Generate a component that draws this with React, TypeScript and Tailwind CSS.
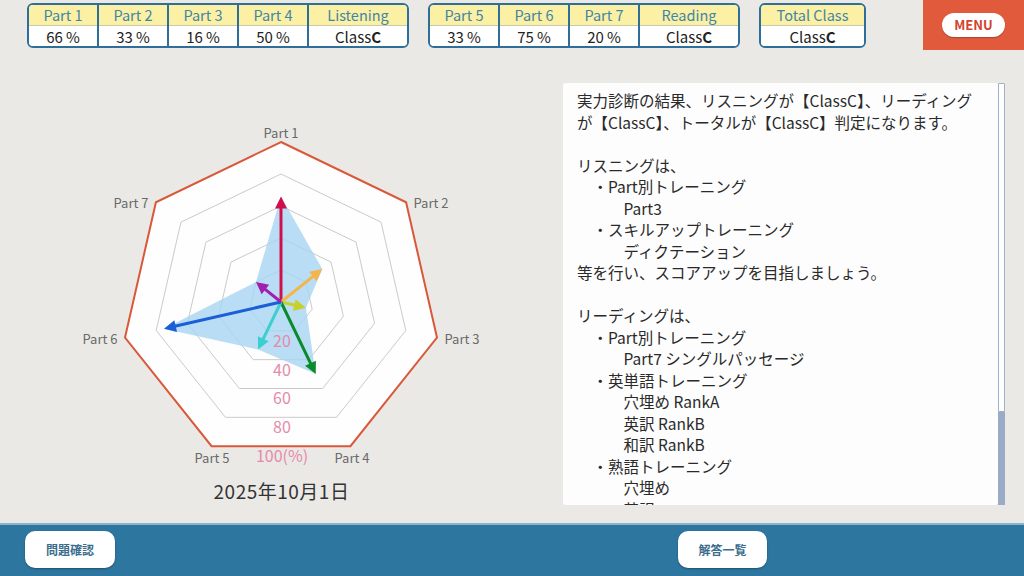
import React from 'react';

const FONT = { fontFamily: '"Noto Sans CJK JP", "Noto Sans", sans-serif' };

type Cell = { head: string; value: React.ReactNode; wide?: boolean };

const Pct = ({ v }: { v: number }) => (
  <span>
    {v}
    <span className="ml-[3px]">%</span>
  </span>
);

const ClassC = () => (
  <span>
    Class<span className="font-bold">C</span>
  </span>
);

const ScoreTable = ({ cells, wideClass = 'w-[100px]' }: { cells: Cell[]; wideClass?: string }) => (
  <div className="flex border-2 border-[#2f6e98] rounded-[6px] overflow-hidden bg-white">
    {cells.map((c, i) => (
      <div
        key={c.head}
        className={`flex flex-col ${c.wide ? wideClass : i === 0 ? 'w-[68px]' : 'w-[70px]'} ${i > 0 ? 'border-l-2 border-[#2f6e98]' : ''}`}
      >
        <div className="h-[21px] bg-[#fbf0a4] border-b border-[#c9c9a8] flex items-center justify-center text-[14.5px] text-[#3f86a6] leading-none">
          {c.head}
        </div>
        <div className="h-[20px] bg-white flex items-center justify-center text-[15px] text-[#222] leading-none">
          {c.value}
        </div>
      </div>
    ))}
  </div>
);

const DATA = [
  { v: 66, color: '#d0104c' },
  { v: 33, color: '#f4b54c' },
  { v: 16, color: '#c6d12e' },
  { v: 50, color: '#0b8a2c' },
  { v: 33, color: '#3ccfcf' },
  { v: 75, color: '#1a5ed8' },
  { v: 20, color: '#a01fae' },
];

const LABELS = [
  { t: 'Part 1', x: 281, y: 82 },
  { t: 'Part 2', x: 431, y: 152 },
  { t: 'Part 3', x: 462, y: 288 },
  { t: 'Part 4', x: 352, y: 407 },
  { t: 'Part 5', x: 212, y: 407 },
  { t: 'Part 6', x: 100, y: 288 },
  { t: 'Part 7', x: 131, y: 152 },
];

const CX = 281;
const CY = 252;
const R = 160;

const pt = (k: number, r: number) => {
  const a = ((-90 + (k * 360) / 7) * Math.PI) / 180;
  return [CX + r * Math.cos(a), CY + r * Math.sin(a)];
};

const ring = (r: number) =>
  Array.from({ length: 7 }, (_, k) => pt(k, r).join(',')).join(' ');

const RadarChart = () => {
  const poly = DATA.map((d, k) => pt(k, (d.v / 100) * R).join(',')).join(' ');
  return (
    <svg width={563} height={430} viewBox="0 0 563 430">
      <polygon points={ring(R)} fill="#fefefe" stroke="#d9583a" strokeWidth={2} />
      {[32, 64, 96, 128].map(r => (
        <polygon key={r} points={ring(r)} fill="none" stroke="#c4c4c4" strokeWidth={0.9} />
      ))}
      <polygon points={poly} fill="#a8d4f3" fillOpacity={0.8} />
      {DATA.map((d, k) => {
        const r = (d.v / 100) * R;
        const a = ((-90 + (k * 360) / 7) * Math.PI) / 180;
        const ux = Math.cos(a);
        const uy = Math.sin(a);
        const tip = [CX + r * ux, CY + r * uy];
        const hl = 12;
        const hw = 6;
        const base = [tip[0] - hl * ux, tip[1] - hl * uy];
        const head = `${tip[0]},${tip[1]} ${base[0] - hw * uy},${base[1] + hw * ux} ${base[0] + hw * uy},${base[1] - hw * ux}`;
        return (
          <g key={k}>
            <line x1={CX} y1={CY} x2={base[0] + ux} y2={base[1] + uy} stroke={d.color} strokeWidth={3} />
            <polygon points={head} fill={d.color} />
          </g>
        );
      })}
      {['20', '40', '60', '80', '100(%)'].map((t, i) => (
        <text
          key={t}
          x={282}
          y={[290, 319, 347, 376, 405][i]}
          textAnchor="middle"
          dominantBaseline="central"
          fontSize={16}
          fill="#e58aab"
          style={FONT}
        >
          {t}
        </text>
      ))}
      {LABELS.map(l => (
        <text
          key={l.t}
          x={l.x}
          y={l.y}
          textAnchor="middle"
          dominantBaseline="central"
          fontSize={13}
          fill="#6a6a6a"
          style={FONT}
        >
          {l.t}
        </text>
      ))}
    </svg>
  );
};

const LINES = [
  '実力診断の結果、リスニングが【ClassC】、リーディング',
  'が【ClassC】、トータルが【ClassC】判定になります。',
  '',
  'リスニングは、',
  '　・Part別トレーニング',
  '　　　Part3',
  '　・スキルアップトレーニング',
  '　　　ディクテーション',
  '等を行い、スコアアップを目指しましょう。',
  '',
  'リーディングは、',
  '　・Part別トレーニング',
  '　　　Part7 シングルパッセージ',
  '　・英単語トレーニング',
  '　　　穴埋め RankA',
  '　　　英訳 RankB',
  '　　　和訳 RankB',
  '　・熟語トレーニング',
  '　　　穴埋め',
  '　　　英訳',
];

export default function App() {
  return (
    <div className="w-[1024px] h-[576px] bg-[#ebe9e6] flex flex-col overflow-hidden" style={FONT}>
      {/* header */}
      <div className="h-[50px] flex items-start shrink-0">
        <div className="ml-[27px] mt-[3px]">
          <ScoreTable
            cells={[
              { head: 'Part 1', value: <Pct v={66} /> },
              { head: 'Part 2', value: <Pct v={33} /> },
              { head: 'Part 3', value: <Pct v={16} /> },
              { head: 'Part 4', value: <Pct v={50} /> },
              { head: 'Listening', value: <ClassC />, wide: true },
            ]}
          />
        </div>
        <div className="ml-[19px] mt-[3px]">
          <ScoreTable
            cells={[
              { head: 'Part 5', value: <Pct v={33} /> },
              { head: 'Part 6', value: <Pct v={75} /> },
              { head: 'Part 7', value: <Pct v={20} /> },
              { head: 'Reading', value: <ClassC />, wide: true },
            ]}
          />
        </div>
        <div className="ml-[19px] mt-[3px]">
          <ScoreTable wideClass="w-[103px]" cells={[{ head: 'Total Class', value: <ClassC />, wide: true }]} />
        </div>
        <div className="ml-auto w-[101px] h-[50px] bg-[#e05a3b] flex items-center justify-center">
          <div className="w-[63px] h-[24px] rounded-full bg-white flex items-center justify-center text-[13px] font-bold text-[#d3432f] shadow-[0_1px_1px_rgba(0,0,0,0.25)]">
            MENU
          </div>
        </div>
      </div>

      {/* main */}
      <div className="flex-1 flex">
        <div className="w-[563px] flex flex-col items-center">
          <RadarChart />
          <div className="w-[563px] text-center text-[19px] leading-[22px] tracking-[0.5px] text-[#333]">2025年10月1日</div>
        </div>
        <div className="mt-[33px] h-[422px] flex">
          <div className="w-[435px] h-full bg-[#fdfdfd] rounded-[3px] overflow-hidden pl-[14px] pt-[7px]">
            {LINES.map((l, i) => (
              <div key={i} className="h-[21.5px] text-[15.5px] leading-[21.5px] text-[#2a2a2a] whitespace-pre">
                {l}
              </div>
            ))}
          </div>
          <div className="w-[7px] h-full flex flex-col">
            <div className="flex-1 border border-[#9fb1c8] bg-white rounded-t-[1px]" />
            <div className="h-[93px] bg-[#9aabc8]" />
          </div>
        </div>
      </div>

      {/* footer */}
      <div className="h-[53px] shrink-0 bg-[#2d76a0] border-t-2 border-[#8fb3cb] flex items-start pt-[6px]">
        <button className="ml-[25px] w-[90px] h-[37px] bg-white rounded-[10px] text-[12px] font-bold text-[#3b6c8c] shadow-[0_1px_2px_rgba(0,0,0,0.3)]">
          問題確認
        </button>
        <button className="ml-[563px] w-[89px] h-[37px] bg-white rounded-[10px] text-[12px] font-bold text-[#3b6c8c] shadow-[0_1px_2px_rgba(0,0,0,0.3)]">
          解答一覧
        </button>
      </div>
    </div>
  );
}
